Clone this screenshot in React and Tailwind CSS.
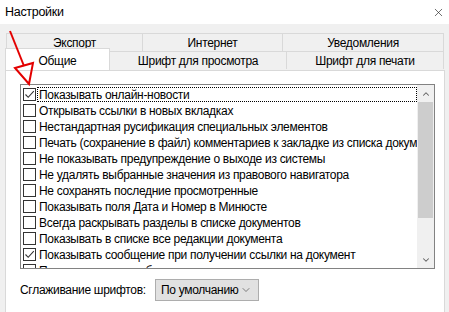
import { ChevronDown, ChevronUp, X } from 'lucide-react'

const rows = [
  { label: 'Показывать онлайн-новости', checked: true, focused: true },
  { label: 'Открывать ссылки в новых вкладках' },
  { label: 'Нестандартная русификация специальных элементов' },
  { label: 'Печать (сохранение в файл) комментариев к закладке из списка документов' },
  { label: 'Не показывать предупреждение о выходе из системы' },
  { label: 'Не удалять выбранные значения из правового навигатора' },
  { label: 'Не сохранять последние просмотренные' },
  { label: 'Показывать поля Дата и Номер в Минюсте' },
  { label: 'Всегда раскрывать разделы в списке документов' },
  { label: 'Показывать в списке все редакции документа' },
  { label: 'Показывать сообщение при получении ссылки на документ', checked: true },
  { label: 'Показывать панель быстрого доступа' },
]

const Checkbox = ({ checked }) => (
  <span className="w-[13px] h-[13px] shrink-0 border border-[#333333] bg-white flex items-center justify-center">
    {checked && (
      <svg width="11" height="11" viewBox="0 0 11 11" fill="none">
        <path d="M1.5 5.5 L4.2 8.3 L9.8 2.2" stroke="#333333" strokeWidth="1.1" />
      </svg>
    )}
  </span>
)

const Tab = ({ children, className = '' }) => (
  <div className={`h-[18px] flex items-center justify-center border-t border-r border-[#d9d9d9] bg-[#f0f0f0] ${className}`}>
    {children}
  </div>
)

export default function App() {
  return (
    <div
      className="relative w-[449px] h-[312px] overflow-hidden bg-[#f0f0f0] text-[12px] leading-none tracking-[-0.3px] text-black"
      style={{ fontFamily: '"Liberation Sans", Arial, sans-serif' }}
    >
      {/* Title bar */}
      <div className="h-[24px] bg-white flex items-center justify-between pl-[5px] pr-[4px]">
        <span className="text-[12.5px]">Настройки</span>
        <X className="w-[13px] h-[13px] text-[#222]" strokeWidth={1.2} />
      </div>

      {/* Tabs */}
      <div className="pt-[9px] pl-[6px] pr-[5px]">
        <div className="flex border-l border-[#d9d9d9]">
          <Tab className="w-[136px]">Экспорт</Tab>
          <Tab className="w-[140px]">Интернет</Tab>
          <Tab className="flex-1">Уведомления</Tab>
        </div>
        <div className="flex">
          <div className="relative z-10 -mt-[3px] -ml-[1px] w-[105px] h-[22px] bg-white border-t border-l border-r border-[#d9d9d9] flex items-start justify-center pt-[6px]">
            Общие
          </div>
          <Tab className="w-[177px]">Шрифт для просмотра</Tab>
          <Tab className="flex-1">Шрифт для печати</Tab>
        </div>
      </div>

      {/* Panel */}
      <div className="ml-[5px] mr-[4px] h-[260px] bg-white border-t border-l border-r border-[#d9d9d9] pt-[13px] pl-[14px] pr-[9px]">
        <div className="h-[185px] border border-[#828282] flex">
          <div className="flex-1 min-w-0 overflow-hidden pl-[2px] pt-[1px]">
            {rows.map((row, i) => (
              <div key={i} className="h-[16px] flex items-center whitespace-nowrap">
                <Checkbox checked={row.checked} />
                <span
                  className={`ml-[1px] h-[15px] pl-[1px] pr-[2px] pt-[1px] flex items-center ${
                    row.focused ? 'flex-1 border border-dotted border-black' : 'border border-transparent'
                  }`}
                >
                  {row.label}
                </span>
              </div>
            ))}
          </div>
          {/* Scrollbar */}
          <div className="w-[17px] shrink-0 bg-[#f0f0f0] flex flex-col">
            <div className="h-[17px] flex items-center justify-center">
              <ChevronUp className="w-[10px] h-[10px] text-[#606060]" strokeWidth={2.5} />
            </div>
            <div className="h-[116px] mx-[1px] bg-[#cdcdcd]" />
            <div className="flex-1" />
            <div className="h-[17px] flex items-center justify-center">
              <ChevronDown className="w-[10px] h-[10px] text-[#606060]" strokeWidth={2.5} />
            </div>
          </div>
        </div>

        {/* Font smoothing */}
        <div className="mt-[10px] flex items-center">
          <span className="w-[135px]">Сглаживание шрифтов:</span>
          <div className="w-[104px] h-[22px] bg-[#e1e1e1] border border-[#adadad] flex items-center justify-between pl-[5px] pr-[6px] whitespace-nowrap">
            <span>По умолчанию</span>
            <ChevronDown className="w-[12px] h-[12px] shrink-0 text-[#444]" strokeWidth={1.3} />
          </div>
        </div>
      </div>

      {/* Red annotation arrow */}
      <svg className="absolute left-0 top-0 z-20 pointer-events-none" width="60" height="100" viewBox="0 0 60 100">
        <line x1="10" y1="31" x2="24" y2="66" stroke="#e30000" strokeWidth="2" />
        <polygon points="15,68 33,63 29,84" fill="none" stroke="#e30000" strokeWidth="2" strokeLinejoin="miter" />
      </svg>
    </div>
  )
}
